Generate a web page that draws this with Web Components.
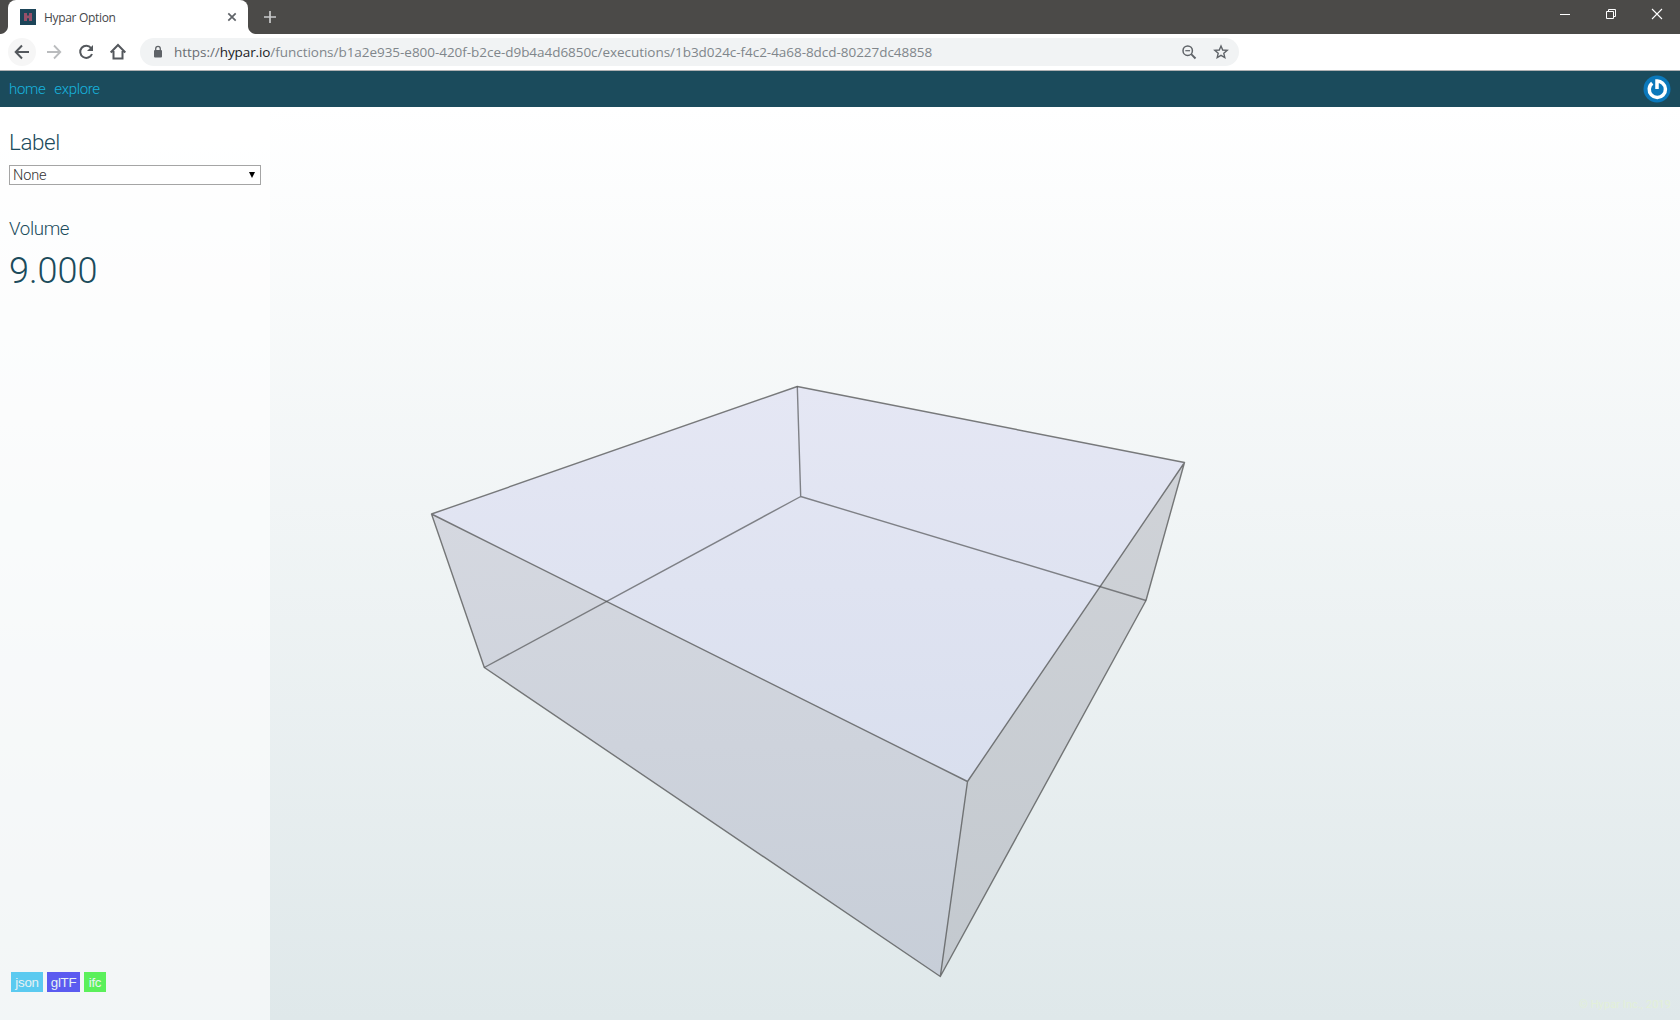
<!DOCTYPE html>
<html lang="en">
<head>
<meta charset="utf-8">
<title>Hypar Option</title>
<style>
html,body{margin:0;height:100%;overflow:hidden;background:#fff}
</style>
</head>
<body>
<hypar-window></hypar-window>
<script>
const define = (name, html) => customElements.define(name, class extends HTMLElement {
  constructor() {
    super();
    this.attachShadow({ mode: 'open' }).innerHTML = html;
  }
});

define('tab-strip', `
<style>
:host{display:flex;height:34px;background:#4b4a48;font-family:"Open Sans",sans-serif}
.tab{position:relative;display:flex;align-items:center;box-sizing:border-box;margin-left:8px;width:240px;height:34px;background:#fff;border-radius:8px 8px 0 0;padding:0 10px 0 12px}
.tab::before,.tab::after{content:"";position:absolute;bottom:0;width:8px;height:8px}
.tab::before{left:-8px;background:radial-gradient(circle at 0 0,transparent 7.5px,#fff 8.5px)}
.tab::after{right:-8px;background:radial-gradient(circle at 100% 0,transparent 7.5px,#fff 8.5px)}
.title{flex:1;margin-left:8px;font-size:12px;letter-spacing:-.32px;color:#45474a}
.plus{margin:10px 0 0 15px}
.controls{display:flex;margin-left:auto}
.controls svg{display:block}
</style>
<div class="tab">
<svg width="16" height="16"><rect width="16" height="16" fill="#1d4559"/><path d="M4 4h3v2.6h2V4h3v8H9V9.2H7V12H4z" fill="#96506a"/></svg>
<span class="title">Hypar Option</span>
<svg width="12" height="12"><path d="M2.3 2.3l7.4 7.4M9.7 2.3L2.3 9.7" stroke="#5f6368" stroke-width="1.7"/></svg>
</div>
<svg class="plus" width="14" height="14"><path d="M7 1v12M1 7h12" stroke="#c9cacb" stroke-width="1.7"/></svg>
<div class="controls">
<svg width="46" height="30"><path d="M18 14.5h10" stroke="#fff"/></svg>
<svg width="46" height="30"><path d="M18.500 11.500h7v7h-7zM20.500 11.500v-2h7v7h-2" fill="none" stroke="#fff"/></svg>
<svg width="46" height="30"><path d="M18 9l10 10M28 9L18 19" stroke="#fff" stroke-width="1.1"/></svg>
</div>`);

define('nav-toolbar', `
<style>
:host{display:flex;align-items:center;height:36px;box-sizing:content-box;border-bottom:1px solid #b0b1b3;background:#fff;font-family:"Open Sans",sans-serif;padding-left:8px}
.back{background:#f6f6f6;border-radius:50%}
svg{display:block;flex:none}
.nav{display:flex;gap:4px;align-items:center}
.omni{display:flex;align-items:center;width:1099px;height:28px;margin-left:8px;border-radius:14px;background:#f1f3f4;box-sizing:border-box;padding:0 10px 0 12px}
.url{flex:1;margin-left:9px;font-size:13.5px;letter-spacing:-.04px;color:#80868b;white-space:nowrap}
.scheme{color:#6a6e73}.host{color:#202124;letter-spacing:-.1px}
.end{display:flex;gap:16px}
</style>
<div class="nav">
<svg class="back" width="28" height="28"><path d="M21 14H8M14 7.500L7.700 14l6.300 6.500" fill="none" stroke="#54585d" stroke-width="2"/></svg>
<svg width="28" height="28"><path d="M7 14h13M14 7.500l6.300 6.500-6.300 6.500" fill="none" stroke="#babcbe" stroke-width="1.8"/></svg>
<svg width="28" height="28"><path d="M19.100 10A6.100 6.100 0 1 0 20 16" fill="none" stroke="#54585d" stroke-width="2"/><path d="M21 7v6h-6z" fill="#54585d"/></svg>
<svg width="28" height="28"><path d="M6.700 14.500L14 7l7.300 7.500M9.500 13v7.500h9V13" fill="none" stroke="#54585d" stroke-width="2"/></svg>
</div>
<div class="omni">
<svg width="13" height="14"><rect x="2" y="5" width="8" height="7.500" rx="1" fill="#5f6368"/><path d="M3.700 6V3.700a2.300 2.300 0 0 1 4.600 0V6" fill="none" stroke="#5f6368" stroke-width="1.3"/></svg>
<span class="url"><span class="scheme">https://</span><span class="host">hypar.io</span>/functions/b1a2e935-e800-420f-b2ce-d9b4a4d6850c/executions/1b3d024c-f4c2-4a68-8dcd-80227dc48858</span>
<div class="end">
<svg width="16" height="16"><g fill="none" stroke="#5f6368"><circle cx="6.700" cy="6.700" r="4.700" stroke-width="1.5"/><path d="M10.200 10.200l4.300 4.300" stroke-width="1.9"/><path d="M4.300 6.700h4.800" stroke-width="1.200"/></g></svg>
<svg width="16" height="16"><path d="M8 2l1.700 4 4.500.400-3.400 2.900 1 4.300L8 11.300l-3.800 2.300 1-4.300-3.400-2.900L6.300 6z" fill="none" stroke="#5f6368" stroke-width="1.400"/></svg>
</div>
</div>`);

define('site-header', `
<style>
:host{display:flex;align-items:center;box-sizing:border-box;height:36px;background:#1b4b5c;padding:0 9px;font:300 15px Roboto,sans-serif;letter-spacing:-.35px}
nav{display:flex;gap:9px}
a{color:#17b3de}
svg{margin-left:auto;display:block}
</style>
<nav><a>home</a><a>explore</a></nav>
<svg width="28" height="28"><circle cx="14" cy="14" r="13.500" fill="#0b78bb"/><path d="M9.200 8.100A8.100 8.100 0 1 0 19.700 8.300Q17 5.700 14 5.900V14" fill="none" stroke="#fff" stroke-width="3.500"/></svg>`);

define('side-panel', `
<style>
:host{display:flex;flex-direction:column;box-sizing:border-box;width:270px;padding:0 9px;background:rgba(255,255,255,.6);font-family:Roboto,sans-serif;font-weight:300;color:#1b4b5c;position:relative}
.label{margin-top:21px;height:28px;line-height:28px;font-size:22.400px;letter-spacing:-.4px}
.select{display:flex;align-items:center;justify-content:space-between;box-sizing:border-box;width:252px;height:20px;margin-top:9px;border:1px solid #a5a5a5;background:#fff;padding:0 4px 0 3px;font-size:14.500px;letter-spacing:-.1px;color:#333}
.volume{margin-top:33px;height:22px;line-height:22px;font-size:18.700px;letter-spacing:-.35px}
.number{margin-top:9px;height:44px;line-height:44px;font-size:36px}
.tags{display:flex;gap:4px;margin:auto 0 28px 2px}
</style>
<div class="label">Label</div>
<div class="select"><span>None</span><svg width="8" height="8"><path d="M1 1h6L4 7z" fill="#000"/></svg></div>
<div class="volume">Volume</div>
<div class="number">9.000</div>
<div class="tags"><format-tag style="--w:32px;--c:#5bcaf0">json</format-tag><format-tag style="--w:33px;--c:#5b5bf0">glTF</format-tag><format-tag style="--w:22px;--c:#5bf05b">ifc</format-tag></div>`);

define('format-tag', `
<style>
:host{display:flex;align-items:center;justify-content:center;width:var(--w);height:20px;background:var(--c);font:400 13.330px "Liberation Sans",sans-serif;letter-spacing:-.3px;color:#e8f2f4}
</style><slot></slot>`);

define('model-view', `
<style>
:host{display:block;width:1680px;height:913px}
svg{display:block}
</style>
<svg width="1680" height="913" viewBox="0 107 1680 913">
<defs>
<linearGradient id="in" gradientUnits="userSpaceOnUse" x1="0" y1="386" x2="0" y2="782"><stop stop-color="#e5e7f4"/><stop offset="1" stop-color="#d9dfee"/></linearGradient>
<linearGradient id="front" gradientUnits="userSpaceOnUse" x1="0" y1="514" x2="0" y2="976"><stop stop-color="#d5d8e0"/><stop offset="1" stop-color="#c7ced8"/></linearGradient>
<linearGradient id="side" gradientUnits="userSpaceOnUse" x1="0" y1="462" x2="0" y2="976"><stop stop-color="#d0d3d8"/><stop offset="1" stop-color="#c3c9cf"/></linearGradient>
</defs>
<path fill="url(#in)" d="M431.500 514L797.300 386.500 1184.500 462.500 967.500 781.500z"/>
<path fill="url(#front)" d="M431.500 514L967.500 781.500 940.300 976.500 484.300 667.500z"/>
<path fill="url(#side)" d="M1184.500 462.500L1146 600.500 940.300 976.500 967.500 781.500z"/>
<g fill="none" stroke="#505152" stroke-width="1.400" stroke-linejoin="round">
<path stroke-opacity=".75" d="M431.500 514L797.300 386.500 1184.500 462.500 967.500 781.500zL484.300 667.500 940.300 976.500 1146 600.500 1184.500 462.500M967.500 781.500L940.300 976.500"/>
<path stroke-opacity=".68" d="M797.300 386.500L800.700 496.500M484.300 667.500L800.700 496.500 1146 600.500"/>
</g>
</svg>`);

define('hypar-window', `
<style>
:host{display:flex;flex-direction:column;width:1680px;height:1020px}
main{display:flex;position:relative;height:913px;background:linear-gradient(#fff,#dfe8ea)}
side-panel{flex:none}
model-view{position:absolute;left:0;top:0}
.copy{position:absolute;right:9px;bottom:9px;font:400 11.200px Roboto,sans-serif;color:#e3f0d8}
</style>
<tab-strip></tab-strip>
<nav-toolbar></nav-toolbar>
<site-header></site-header>
<main><model-view></model-view><side-panel></side-panel><span class="copy">© Hypar Inc., 2019</span></main>`);
</script>
</body>
</html>
